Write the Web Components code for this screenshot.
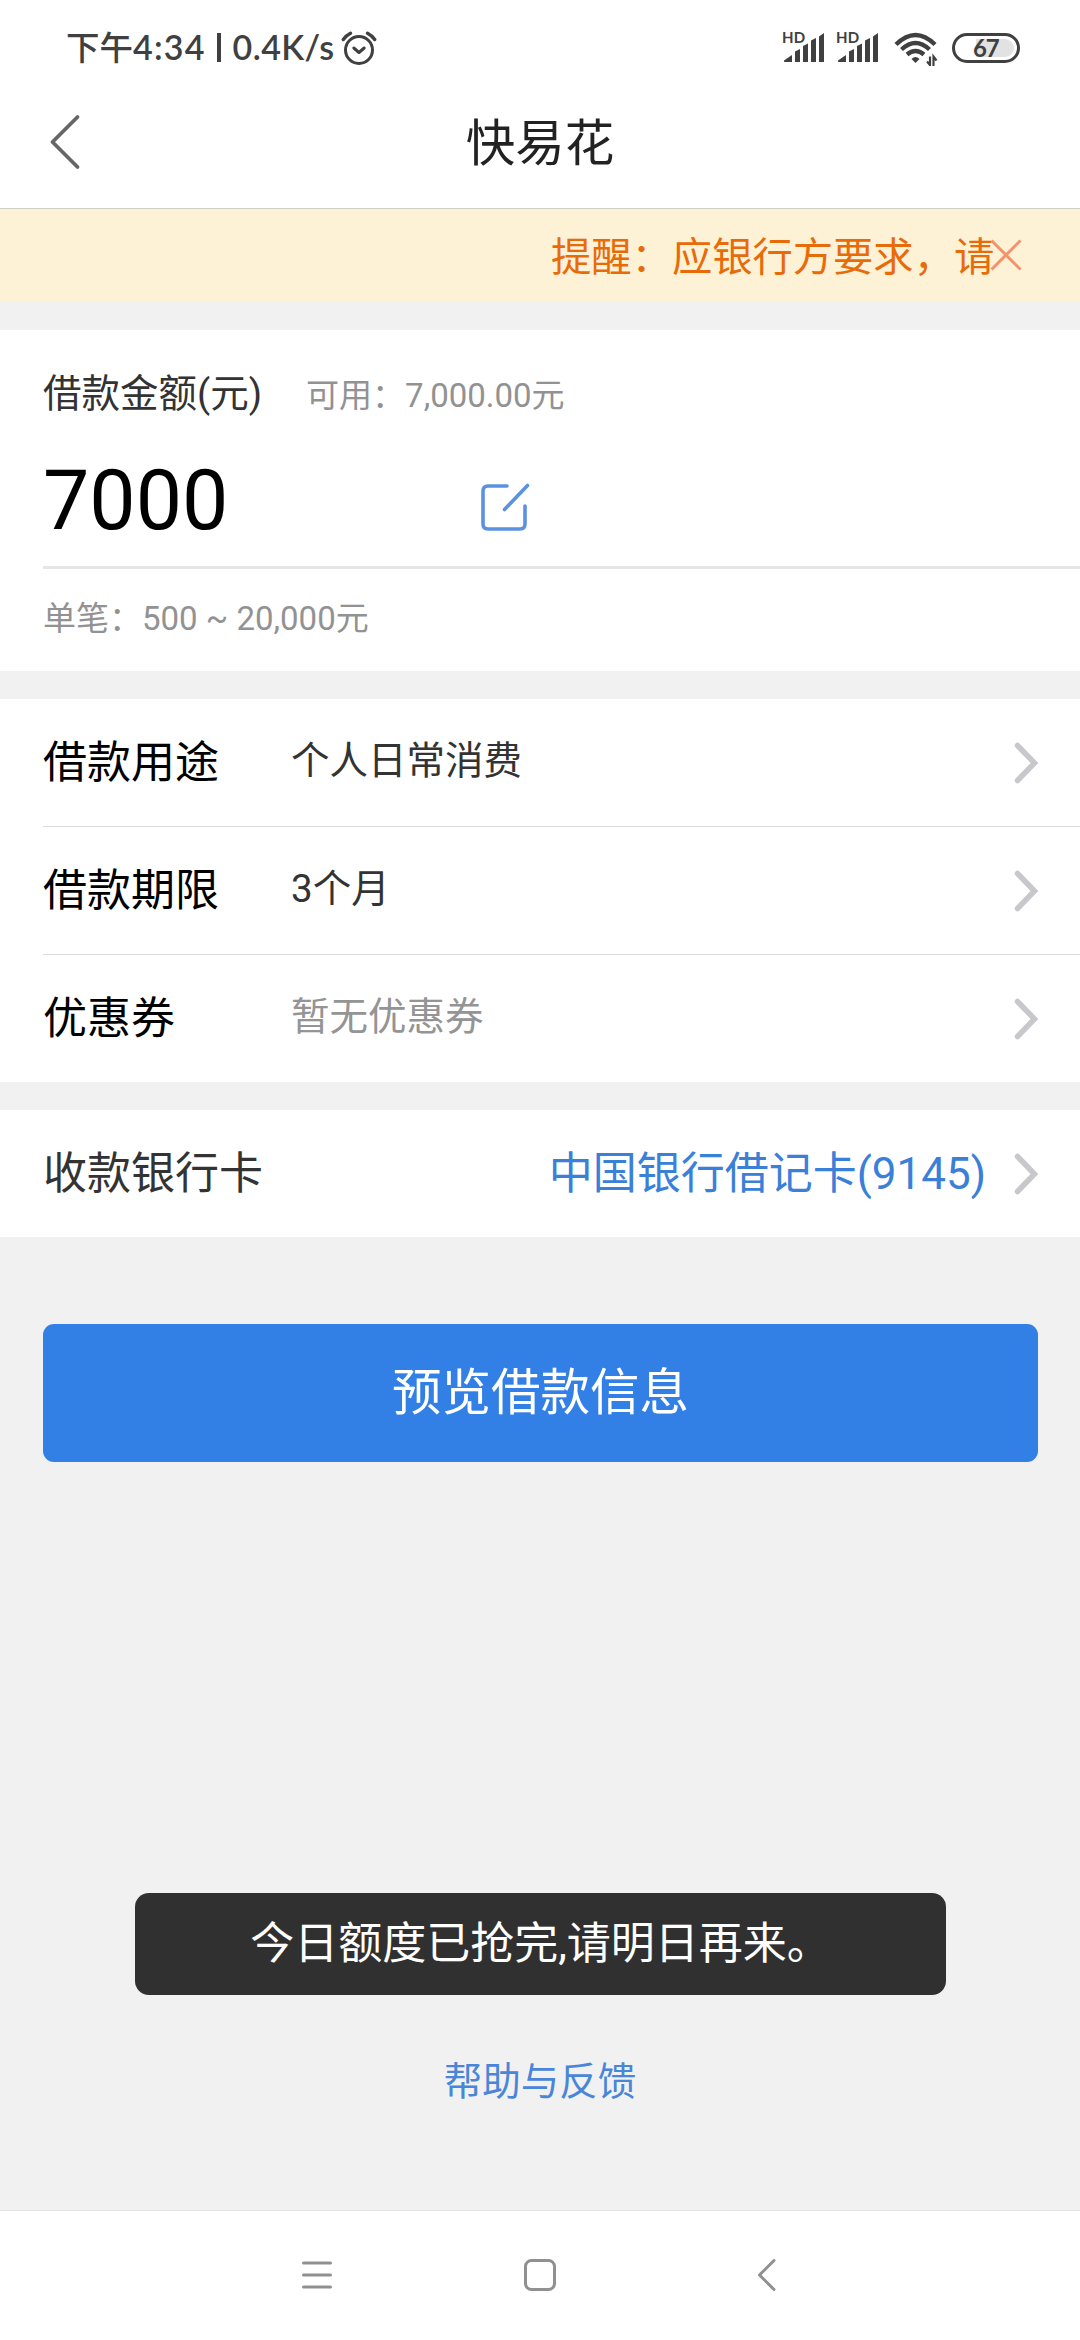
<!DOCTYPE html>
<html lang="zh-CN">
<head>
<meta charset="utf-8">
<title>快易花</title>
<style>
  html, body {
    margin: 0;
    padding: 0;
  }
  body {
    width: 1080px;
    height: 2340px;
    overflow: hidden;
    background: #f1f1f1;
    font-family: Roboto, "Noto Sans CJK SC", sans-serif;
    color: #333333;
  }
</style>
</head>
<body>
<loan-page>
  <status-bar slot="top" time="下午4:34" speed="0.4K/s" battery="67"></status-bar>
  <title-bar slot="top">快易花</title-bar>
  <notice-bar slot="top">提醒：应银行方要求，请</notice-bar>

  <amount-card amount="7000">
    <span slot="label">借款金额(元)</span>
    <span slot="available">可用：7,000.00元</span>
    <span slot="limit">单笔：500 ~ 20,000元</span>
  </amount-card>

  <cell-group>
    <cell-row label="借款用途">个人日常消费</cell-row>
    <cell-row label="借款期限">3个月</cell-row>
    <cell-row label="优惠券" empty>暂无优惠券</cell-row>
  </cell-group>

  <cell-group>
    <cell-row label="收款银行卡" link>中国银行借记卡(9145)</cell-row>
  </cell-group>

  <main-button>预览借款信息</main-button>

  <help-link slot="bottom">帮助与反馈</help-link>
  <system-nav slot="bottom"></system-nav>
  <toast-message slot="toast">今日额度已抢完,请明日再来。</toast-message>
</loan-page>

<script>
class BaseElement extends HTMLElement {
  constructor() {
    super();
    this.attachShadow({ mode: "open" });
  }

  connectedCallback() {
    this.shadowRoot.innerHTML = this.render();
  }

  render() {
    return "<slot></slot>";
  }
}

class LoanPage extends BaseElement {
  render() {
    return `
      <style>
        :host {
          display: flex;
          flex-direction: column;
          position: relative;
          width: 1080px;
          height: 2340px;
          background: #f1f1f1;
        }
        main {
          flex: 1;
          display: flex;
          flex-direction: column;
          gap: 28px;
          padding-top: 29px;
        }
      </style>
      <slot name="top"></slot>
      <main><slot></slot></main>
      <slot name="bottom"></slot>
      <slot name="toast"></slot>
    `;
  }
}

class SignalIcon extends BaseElement {
  render() {
    return `
      <style>
        :host { display: block; width: 44px; height: 36px; }
        svg { display: block; }
        text { font: 700 15px Lato, sans-serif; letter-spacing: 0.2px; }
      </style>
      <svg width="44" height="36" viewBox="-2 -4 44 36" fill="#404040">
        <text x="-2" y="11">HD</text>
        <path d="M0 29.500V28.500L8 23V30H0.500Z"/>
        <path d="M11 30V19.500L16 17V30Z"/>
        <path d="M19 30V14L24 11.500V30Z"/>
        <path d="M27 30V8.500L32 6V30Z"/>
        <path d="M35 30V4.500L40 1V30Z"/>
      </svg>
    `;
  }
}

class BatteryIcon extends BaseElement {
  render() {
    return `
      <style>
        :host { display: block; width: 68px; height: 30px; }
        div {
          box-sizing: border-box;
          width: 68px;
          height: 30px;
          padding: 3px 3px 3px 21px;
          border: 3px solid #404040;
          border-radius: 15px;
        }
        span {
          display: block;
          width: 38px;
          height: 18px;
          background: #e2e2e2;
          border-radius: 0 9px 9px 0;
          font: 700 24px/18px Lato, sans-serif;
          letter-spacing: -1.200px;
          text-indent: -3px;
          color: #404040;
        }
      </style>
      <div><span>${this.getAttribute("level")}</span></div>
    `;
  }
}

class StatusBar extends BaseElement {
  render() {
    return `
      <style>
        :host {
          display: flex;
          align-items: flex-start;
          box-sizing: border-box;
          height: 80px;
          padding: 0 60px 0 66px;
          background: #ffffff;
          color: #404040;
        }
        .text {
          display: flex;
          padding-top: 23px;
          font: 600 34px/48px Lato, "Noto Sans CJK SC", sans-serif;
          white-space: pre;
        }
        .cn { font-size: 33.5px; font-weight: 500; }
        .time { letter-spacing: 1.2px; }
        .bar { width: 4px; height: 29px; margin: 10px 12px 0 11px; background: #404040; }
        .speed { letter-spacing: 0.4px; }
        .alarm { margin: 30px 0 0 6px; }
        .icons { display: flex; margin-left: auto; padding-top: 32px; }
        signal-icon { margin: -4px 10px 0 0; }
        .wifi { margin: 0 14px 0 4px; }
        battery-icon { margin-top: 1px; }
      </style>
      <div class="text">
        <span class="cn">${this.getAttribute("time").slice(0, 2)}</span>
        <span class="time">${this.getAttribute("time").slice(2)}</span>
        <span class="bar"></span>
        <span class="speed">${this.getAttribute("speed")}</span>
      </div>
      <svg class="alarm" width="36" height="36" viewBox="0 0 36 36" fill="none" stroke="#404040" stroke-width="3" stroke-linecap="round" stroke-linejoin="round">
        <circle cx="18" cy="20" r="13.5"/>
        <path d="M12.800 18L18 22.500L23.200 18"/>
        <path d="M2.300 9.500Q5 5.500 9.500 3.200M33.700 9.500Q31 5.500 26.500 3.200" stroke-width="3.400"/>
      </svg>
      <div class="icons">
        <signal-icon></signal-icon>
        <signal-icon></signal-icon>
        <svg class="wifi" width="44" height="36" viewBox="0 0 44 36" fill="none" stroke="#404040" stroke-width="4.400">
          <path d="M2 12.500Q21.500 -6.500 41 12.500"/>
          <path d="M7.500 17.500Q21.500 4.500 35.500 17.500"/>
          <path d="M13 22.500Q21.500 15.500 30 22.500"/>
          <path d="M21.500 31L17.500 27Q21.500 23 25.500 27Z" fill="#404040" stroke="none"/>
          <path d="M36 24.500V34M33 29.500L36 33M39.500 34V24.500L42.500 28.500" stroke-width="2.200"/>
        </svg>
        <battery-icon level="${this.getAttribute("battery")}"></battery-icon>
      </div>
    `;
  }
}

class TitleBar extends BaseElement {
  render() {
    return `
      <style>
        :host {
          display: grid;
          grid-template-columns: 130px 1fr 130px;
          align-items: center;
          box-sizing: border-box;
          height: 129px;
          background: #ffffff;
          border-bottom: 1px solid #cfcfca;
          font-size: 49.5px;
          line-height: 60px;
          color: #222222;
        }
        svg { margin: 0 0 5px 48px; }
        h1 { margin: 0; font: inherit; text-align: center; }
      </style>
      <svg width="36" height="58" viewBox="0 0 36 58" fill="none" stroke="#666666" stroke-width="3.800" stroke-linecap="round" stroke-linejoin="round">
        <path d="M29.500 4L4.500 29L29.500 54"/>
      </svg>
      <h1><slot></slot></h1>
    `;
  }
}

class NoticeBar extends BaseElement {
  render() {
    return `
      <style>
        :host {
          display: flex;
          align-items: center;
          height: 92px;
          padding-left: 551px;
          background: #fef2d6;
          color: #e86b0a;
          font-size: 40.3px;
          line-height: 50px;
        }
        span { width: 439px; margin-top: 6px; white-space: nowrap; }
      </style>
      <span><slot></slot></span>
      <svg width="32" height="32" viewBox="0 0 32 32" fill="none" stroke="#f3936c" stroke-width="3">
        <path d="M1.500 1.500L30.500 30.500M30.500 1.500L1.500 30.500"/>
      </svg>
    `;
  }
}

class AmountCard extends BaseElement {
  render() {
    return `
      <style>
        :host {
          display: block;
          box-sizing: border-box;
          height: 341px;
          padding: 34px 0 0 43px;
          background: #ffffff;
        }
        .head {
          display: flex;
          align-items: baseline;
          gap: 44px;
          height: 60px;
          line-height: 60px;
          font-size: 38.5px;
        }
        .small { font-size: 33px; color: #929292; }
        .value {
          display: flex;
          align-items: center;
          box-sizing: border-box;
          height: 145px;
          padding-top: 11px;
          border-bottom: 3px solid #e6e6e6;
          font-size: 82.5px;
          line-height: 100px;
          color: #000000;
        }
        .number { width: 436px; }
        svg { margin-top: 12px; }
        .limit { line-height: 100px; }
      </style>
      <div class="head">
        <slot name="label"></slot>
        <span class="small"><slot name="available"></slot></span>
      </div>
      <div class="value">
        <span class="number">${this.getAttribute("amount")}</span>
        <svg width="52" height="52" viewBox="0 0 52 52" fill="none" stroke="#5a92e0" stroke-width="3.600" stroke-linecap="round">
          <path d="M28 5H9Q4 5 4 10V43Q4 48 9 48H41Q46 48 46 43V25"/>
          <path d="M25.500 28.500L48.500 4.500"/>
        </svg>
      </div>
      <div class="small limit"><slot name="limit"></slot></div>
    `;
  }
}

class CellGroup extends BaseElement {
  render() {
    return `
      <style>
        :host { display: block; background: #ffffff; }
        ::slotted(:not(:last-child)) { --line: #dcdcdc; }
      </style>
      <slot></slot>
    `;
  }
}

class CellRow extends BaseElement {
  render() {
    return `
      <style>
        :host { display: block; padding-left: 43px; }
        .row {
          display: flex;
          align-items: center;
          height: 127px;
          padding-right: 41px;
          line-height: 60px;
        }
        :host(:not(:last-child)) .row { border-bottom: 1px solid var(--line); }
        .label { width: 248px; font-size: 44px; color: #000000; white-space: nowrap; }
        .text { flex: 1; padding-bottom: 3px; font-size: 38.5px; }
        :host([empty]) .text { color: #949494; }
        :host([link]) .label { color: #333333; }
        :host([link]) .text {
          padding: 0 27px 0 0;
          text-align: right;
          font-size: 44px;
          color: #3a80d9;
        }
      </style>
      <div class="row">
        <span class="label">${this.getAttribute("label")}</span>
        <span class="text"><slot></slot></span>
        <svg width="26" height="42" viewBox="0 0 26 42" fill="none" stroke="#c8c8cc" stroke-width="5.500" stroke-linecap="round">
          <path d="M4.500 3.500L21.500 21L4.500 38.500"/>
        </svg>
      </div>
    `;
  }
}

class MainButton extends BaseElement {
  render() {
    return `
      <style>
        :host { display: block; padding: 59px 42px 0 43px; }
        button {
          display: block;
          width: 100%;
          height: 138px;
          padding: 0 0 1px;
          border: 0;
          border-radius: 11px;
          background: #327fe5;
          color: #ffffff;
          font: 49.5px/60px Roboto, "Noto Sans CJK SC", sans-serif;
        }
      </style>
      <button><slot></slot></button>
    `;
  }
}

class ToastMessage extends BaseElement {
  render() {
    return `
      <style>
        :host {
          position: absolute;
          top: 1893px;
          left: 135px;
          width: 811px;
          height: 102px;
          border-radius: 14px;
          background: #303030;
          color: #ffffff;
          font-size: 44px;
          line-height: 102px;
          text-align: center;
        }
      </style>
      <slot></slot>
    `;
  }
}

class HelpLink extends BaseElement {
  render() {
    return `
      <style>
        :host {
          display: block;
          padding-bottom: 98px;
          font-size: 38.5px;
          line-height: 60px;
          text-align: center;
          color: #4a86d8;
        }
      </style>
      <slot></slot>
    `;
  }
}

class SystemNav extends BaseElement {
  render() {
    return `
      <style>
        :host {
          display: flex;
          align-items: center;
          box-sizing: border-box;
          height: 130px;
          padding: 0 0 1px 299px;
          border-top: 1px solid #e3e3e3;
          background: #ffffff;
        }
        svg { display: block; }
        .home { margin: 0 191px 0 187px; }
      </style>
      <svg width="36" height="36" viewBox="0 0 36 36" stroke="#909090" stroke-width="3" stroke-linecap="round">
        <path d="M4.500 6H31.500M4.500 18H31.500M4.500 30H31.500"/>
      </svg>
      <svg class="home" width="36" height="36" viewBox="0 0 36 36" fill="none" stroke="#909090" stroke-width="3">
        <rect x="3.500" y="3.500" width="29" height="29" rx="6"/>
      </svg>
      <svg width="36" height="36" viewBox="0 0 36 36" fill="none" stroke="#909090" stroke-width="3" stroke-linecap="round" stroke-linejoin="round">
        <path d="M25 3.500L10.500 18L25 32.500"/>
      </svg>
    `;
  }
}

customElements.define("loan-page", LoanPage);
customElements.define("signal-icon", SignalIcon);
customElements.define("battery-icon", BatteryIcon);
customElements.define("status-bar", StatusBar);
customElements.define("title-bar", TitleBar);
customElements.define("notice-bar", NoticeBar);
customElements.define("amount-card", AmountCard);
customElements.define("cell-group", CellGroup);
customElements.define("cell-row", CellRow);
customElements.define("main-button", MainButton);
customElements.define("toast-message", ToastMessage);
customElements.define("help-link", HelpLink);
customElements.define("system-nav", SystemNav);
</script>
</body>
</html>
